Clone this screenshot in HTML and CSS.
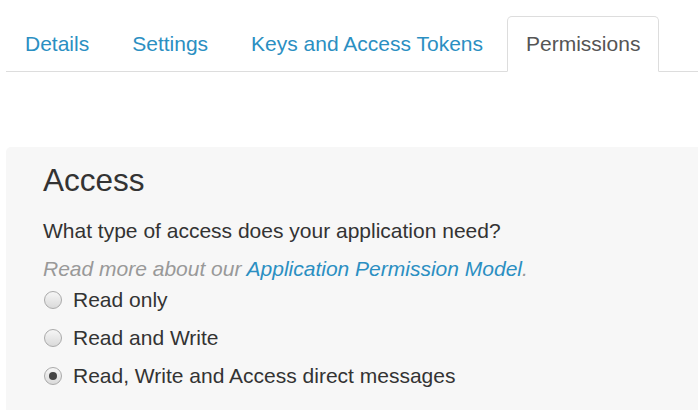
FILE: index.html
```html
<!DOCTYPE html>
<html>
<head>
<meta charset="utf-8">
<link rel="stylesheet" href="styles.css">
</head>
<body>
<div class="page">
  <ul class="tabs">
    <li class="tab"><a href="#">Details</a></li>
    <li class="tab"><a href="#">Settings</a></li>
    <li class="tab"><a href="#">Keys and Access Tokens</a></li>
    <li class="tab active"><a href="#">Permissions</a></li>
  </ul>
  <div class="well">
    <h2 class="title">Access</h2>
    <p class="question">What type of access does your application need?</p>
    <p class="hint">Read more about our <a href="#">Application Permission Model</a>.</p>
    <label class="option"><span class="radio"></span>Read only</label>
    <label class="option"><span class="radio"></span>Read and Write</label>
    <label class="option"><span class="radio checked"></span>Read, Write and Access direct messages</label>
  </div>
</div>
</body>
</html>
```
FILE: styles.css
```css
html, body {
  margin: 0;
  padding: 0;
  background: #fff;
  overflow: hidden;
}
body {
  font-family: "Liberation Sans", Arial, sans-serif;
  font-size: 21px;
  color: #333;
}
.page {
  padding: 16px 0 0 6px;
}
.tabs {
  list-style: none;
  margin: 0;
  padding: 0;
  display: flex;
  border-bottom: 1px solid #ddd;
}
.tab {
  margin-right: 5px;
  margin-bottom: -1px;
}
.tab a {
  display: block;
  padding: 14px 18px 14px;
  line-height: 26px;
  color: #2b8fc2;
  text-decoration: none;
  border: 1px solid transparent;
  border-radius: 5px 5px 0 0;
}
.tab.active a {
  color: #555;
  background: #fff;
  border-color: #ddd;
  border-bottom-color: #fff;
}
.well {
  margin-top: 75px;
  background: #f7f7f7;
  border-radius: 5px 0 0 0;
  padding: 13px 0 0 37px;
  height: 263px;
  box-sizing: border-box;
}
.title {
  margin: 0;
  font-size: 31.5px;
  font-weight: 400;
  line-height: 40px;
  color: #333;
}
.question {
  margin: 18px 0 0;
  line-height: 26px;
}
.hint {
  margin: 12px 0 0;
  line-height: 26px;
  font-style: italic;
  color: #999;
}
.hint a {
  color: #2b8fc2;
  text-decoration: none;
}
.option {
  display: flex;
  align-items: center;
  line-height: 26px;
  margin-top: 12px;
}
.hint + .option {
  margin-top: 5px;
}
.radio {
  width: 18px;
  height: 18px;
  border-radius: 50%;
  border: 1px solid #aaa;
  background: linear-gradient(#f6f6f6, #dadada);
  margin: 0 11px 0 1px;
  box-sizing: border-box;
  position: relative;
}
.radio.checked::after {
  content: "";
  position: absolute;
  left: 4px;
  top: 4px;
  width: 8px;
  height: 8px;
  border-radius: 50%;
  background: #444;
}
```
